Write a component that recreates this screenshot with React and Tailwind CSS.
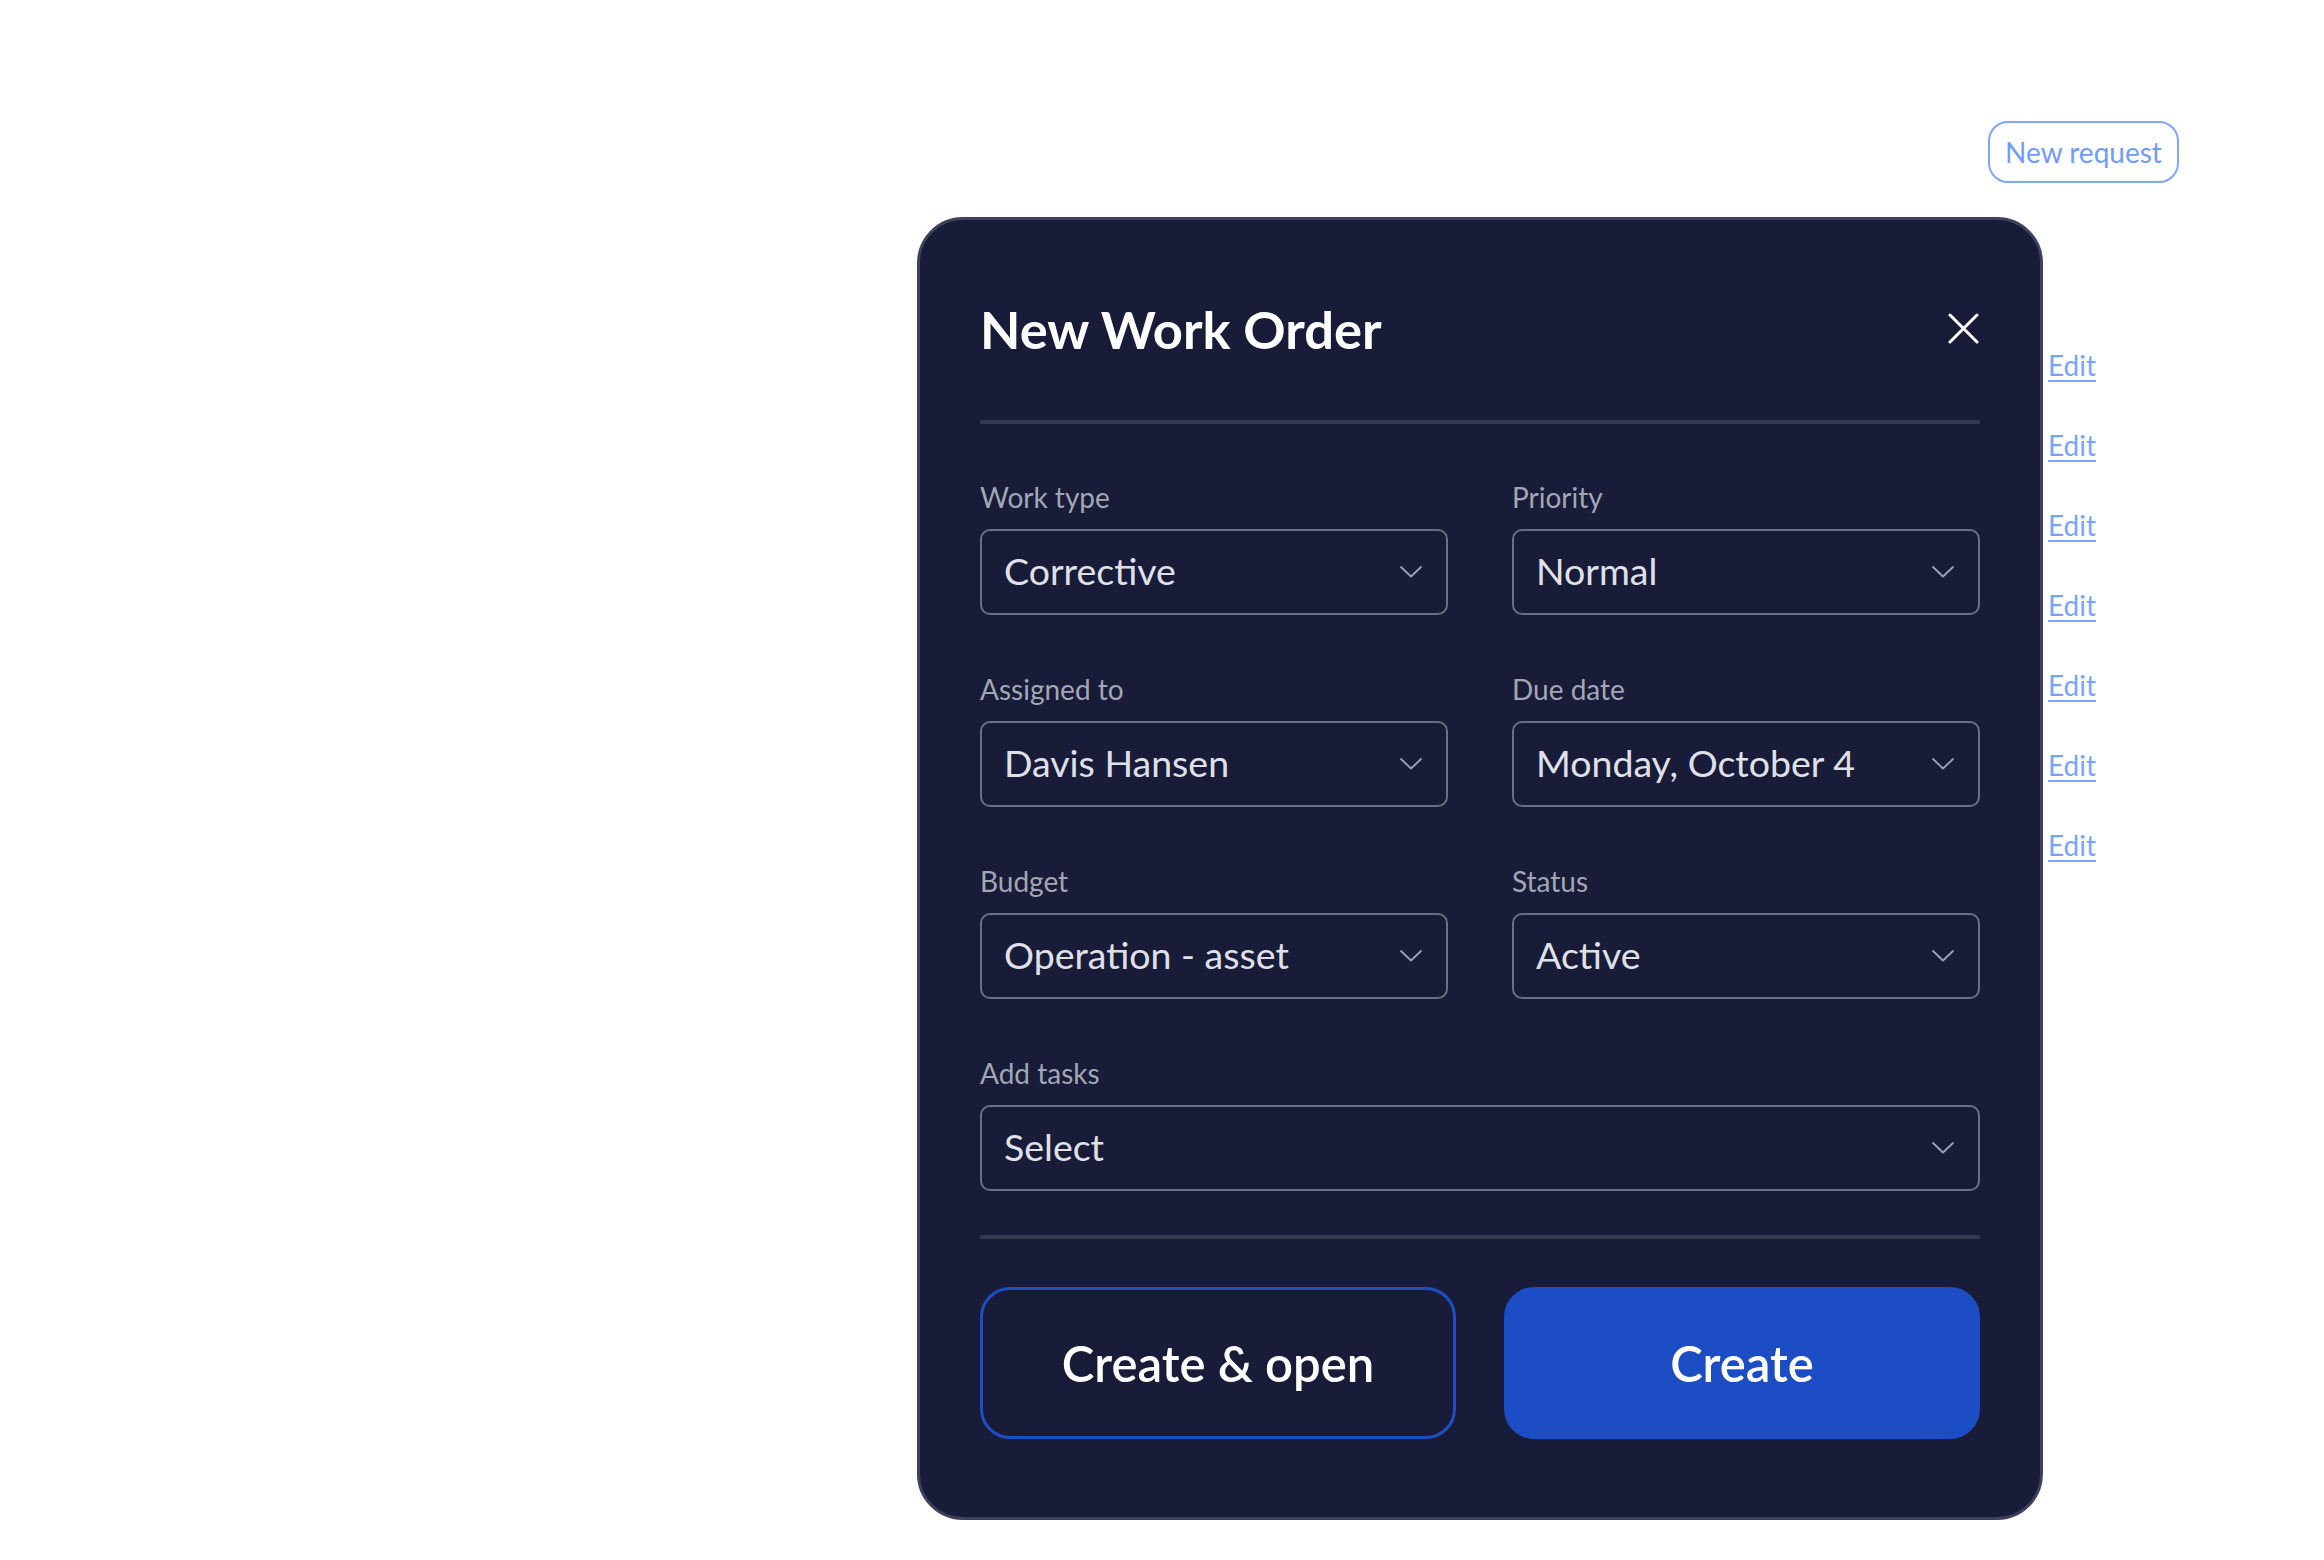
import React from "react";

function Chevron() {
  return (
    <svg width="22" height="12" viewBox="0 0 22 12" fill="none" className="shrink-0">
      <path d="M1 1 L11 10.5 L21 1" stroke="#9fa2b2" strokeWidth="1.8" strokeLinecap="round" strokeLinejoin="round" />
    </svg>
  );
}

function CloseIcon() {
  return (
    <svg width="31" height="31" viewBox="0 0 31 31" fill="none">
      <path d="M2 2 L29 29 M29 2 L2 29" stroke="#ffffff" strokeWidth="3" strokeLinecap="round" />
    </svg>
  );
}

function Field({ label, value, wide }) {
  return (
    <div className={wide ? "col-span-2 flex flex-col gap-[18px]" : "flex flex-col gap-[18px]"}>
      <span className="text-[28px] leading-[28px] text-[#a3a6b4]">{label}</span>
      <div className="flex h-[86px] items-center justify-between rounded-[10px] border-2 border-[#6c7083] pl-[22px] pr-[24px]">
        <span className="-mt-[2px] text-[37.5px] leading-none text-[#e0e1e8]">{value}</span>
        <Chevron />
      </div>
    </div>
  );
}

export default function App() {
  const rows = [0, 1, 2, 3, 4, 5, 6];
  return (
    <div className="relative h-[1560px] w-[2324px] overflow-hidden bg-white font-['Lato','Noto_Sans',sans-serif]">
      {/* page header */}
      <div className="flex justify-end pr-[145px] pt-[121px]">
        <button className="flex h-[62px] w-[191px] items-center justify-center rounded-[20px] border-2 border-[#7ea6ff] text-[28px] leading-none text-[#6f9bff]">
          New request
        </button>
      </div>

      {/* table actions column */}
      <div className="ml-[2048px] mt-[142px] flex flex-col items-start">
        {rows.map((r) => (
          <a
            key={r}
            href="#"
            className="h-[80px] text-[28px] leading-[80px] text-[#7aa2ff] underline underline-offset-[4px]"
          >
            Edit
          </a>
        ))}
      </div>

      {/* dialog */}
      <div className="absolute left-[917px] top-[217px] w-[1126px] rounded-[46px] border-[3px] border-[#3d4159] bg-[#181c38] px-[60px] pb-[78px] pt-[83px]">
        <div className="flex h-[51px] items-center justify-between">
          <h2 className="text-[52.5px] font-bold leading-[51px] text-white">New Work Order</h2>
          <button className="mr-[1px] flex items-center justify-center">
            <CloseIcon />
          </button>
        </div>

        <div className="mt-[66px] h-[4px] bg-[#343951]" />

        <div className="mt-[59px] grid grid-cols-2 gap-x-[64px] gap-y-[60px]">
          <Field label="Work type" value="Corrective" />
          <Field label="Priority" value="Normal" />
          <Field label="Assigned to" value="Davis Hansen" />
          <Field label="Due date" value="Monday, October 4" />
          <Field label="Budget" value="Operation - asset" />
          <Field label="Status" value="Active" />
          <Field label="Add tasks" value="Select" wide />
        </div>

        <div className="mt-[44px] h-[4px] bg-[#343951]" />

        <div className="mt-[48px] grid grid-cols-2 gap-x-[48px]">
          <button className="flex h-[152px] items-center justify-center rounded-[30px] border-[3px] border-[#1d4fc4] text-[49px] font-semibold leading-none text-white">
            Create &amp; open
          </button>
          <button className="flex h-[152px] items-center justify-center rounded-[30px] bg-[#1c4dc5] text-[49px] font-semibold leading-none text-white">
            Create
          </button>
        </div>
      </div>
    </div>
  );
}
